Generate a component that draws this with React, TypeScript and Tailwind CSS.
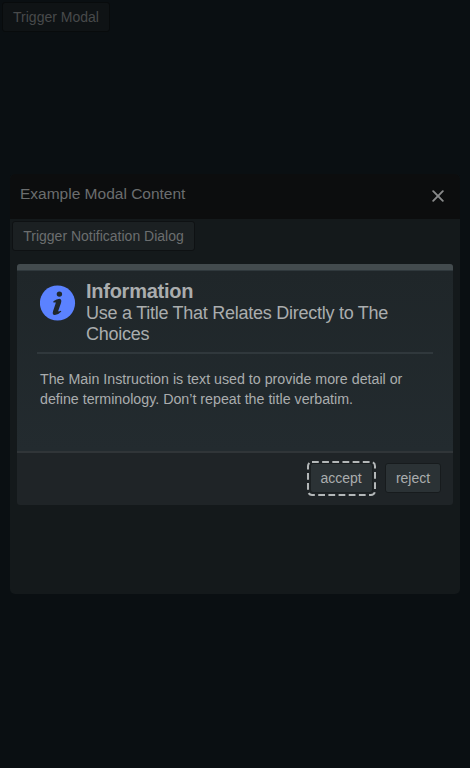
const buttonBase = 'box-border flex h-[30px] items-center justify-center rounded-[3px] border text-[14px] leading-none whitespace-nowrap';

function InfoIcon() {
  return (
    <svg className="h-9 w-9 shrink-0" viewBox="0.5 0 36 36" aria-hidden="true">
      <circle cx="18" cy="18" r="17.6" fill="#5b82ff" />
      <circle cx="19.9" cy="9.1" r="2.7" fill="#20282c" />
      <path d="M13.8 16.3Q17.2 13.7 20 13.7Q22.6 14 21.5 18L18.8 25.8Q18.4 27.4 21.1 25.8L21.9 26.6Q18.5 30.2 15.2 30.1Q12.4 29.8 13.6 26L16.1 18.6Q16.7 16.6 14.2 17.7Z" fill="#20282c" />
    </svg>
  );
}

function NotificationDialog() {
  return (
    <section role="dialog" className="mx-[7px] mt-[13px] flex h-[241px] flex-col overflow-hidden rounded-[3px] bg-[#1f2427] text-[#aaadae]">
      <div className="h-[7px] shrink-0 border-b border-[#30393d] bg-[#434b4e]" />
      <div className="flex h-[180px] shrink-0 flex-col bg-linear-to-b from-[#1f2629] to-[#232b2f]">
        <header className="mx-[20px] flex h-[81px] shrink-0 gap-[10px] pt-[14px] pl-[3px]">
          <InfoIcon />
          <div className="-mt-[4px] text-[18px] leading-[21.5px] tracking-[-0.26px]">
            <h2 className="text-[20px] font-bold">Information</h2>
            <p>Use a Title That Relates Directly to The Choices</p>
          </div>
        </header>
        <div className="mx-[20px] h-[2px] shrink-0 bg-[#30383c]" />
        <p className="px-[23px] pt-[15px] text-[14.24px] leading-[20px]">The Main Instruction is text used to provide more detail or define terminology. Don’t repeat the title verbatim.</p>
      </div>
      <footer className="flex grow items-start justify-end gap-[9px] border-t-2 border-[#303538] pt-[8px] pr-[12px]">
        <div className="relative flex h-[35px] w-[69px] justify-center pt-[2px]">
          <svg className="absolute inset-0" width="69" height="35" aria-hidden="true">
            <rect x="1" y="1" width="67" height="33" rx="4" fill="none" stroke="#b3b7b8" strokeWidth="2" strokeDasharray="6.77 3.39" />
          </svg>
          <button className={`${buttonBase} w-[63px] shrink-0 border-[#1a1f21] bg-[#2b3235] pr-px`}>accept</button>
        </div>
        <button className={`${buttonBase} mt-[2px] w-[56px] border-[#171b1d] bg-[#2b3235]`}>reject</button>
      </footer>
    </section>
  );
}

export default function App() {
  return (
    <main className="flex h-[768px] w-[470px] flex-col bg-[#0a0f12] font-['Liberation_Sans',Arial,sans-serif]">
      <div className="h-[174px] shrink-0 pt-[2px] pl-[2px]">
        <button className={`${buttonBase} w-[108px] border-[#080b0c] bg-[#0f1315] text-[#484a4b]`}>Trigger Modal</button>
      </div>
      <div className="mx-[10px] flex h-[420px] flex-col overflow-hidden rounded-[5px] bg-[#14191b]">
        <header className="flex h-[45px] shrink-0 items-center justify-between bg-[#0c0d0e] pr-[16px] pl-[10px]">
          <h1 className="-mt-[5px] text-[15.5px] text-[#6b6d6e]">Example Modal Content</h1>
          <svg className="-mt-[1px] h-[12px] w-[12px]" viewBox="0 0 12 12" fill="none" stroke="#898a8b" strokeWidth="1.9" strokeLinecap="round" aria-label="Close">
            <path d="M1.2 1.2L10.8 10.8M10.8 1.2L1.2 10.8" />
          </svg>
        </header>
        <div className="pt-[2px] pl-[2px]">
          <button className={`${buttonBase} w-[183px] border-[#0e1113] bg-[#1b2022] text-[#6b6e6f]`}>Trigger Notification Dialog</button>
        </div>
        <NotificationDialog />
      </div>
    </main>
  );
}
